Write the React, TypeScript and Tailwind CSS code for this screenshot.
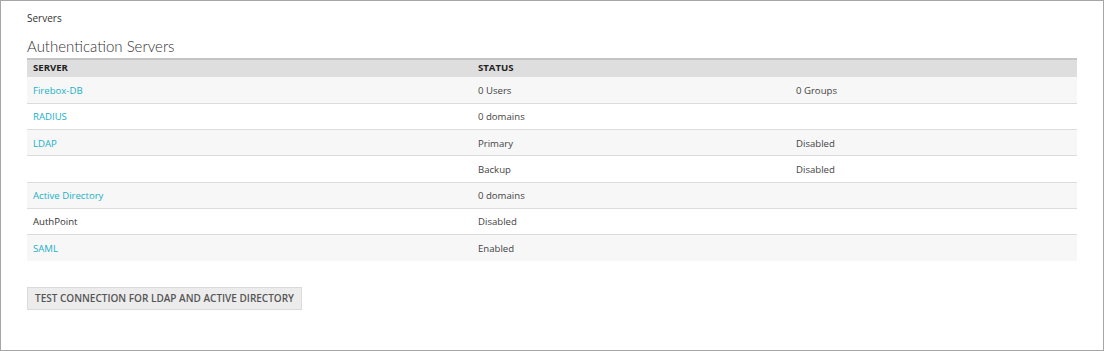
import React from 'react';

interface Row {
  name: string;
  link: boolean;
  status: string;
  extra?: string;
}

const rows: Row[] = [
  { name: 'Firebox-DB', link: true, status: '0 Users', extra: '0 Groups' },
  { name: 'RADIUS', link: true, status: '0 domains' },
  { name: 'LDAP', link: true, status: 'Primary', extra: 'Disabled' },
  { name: '', link: false, status: 'Backup', extra: 'Disabled' },
  { name: 'Active Directory', link: true, status: '0 domains' },
  { name: 'AuthPoint', link: false, status: 'Disabled' },
  { name: 'SAML', link: true, status: 'Enabled' },
];

const App: React.FC = () => {
  return (
    <div
      className="w-[1104px] h-[351px] bg-white border border-[#a6a6a6] text-[#333] overflow-hidden"
      style={{ fontFamily: '"Open Sans", "Liberation Sans", sans-serif' }}
    >
      <div className="pl-[26px] pr-[26px] pt-[10px]">
        <div className="text-[10px] leading-[14px] text-[#333]">Servers</div>
        <h1
          className="mt-[12px] text-[15px] leading-[18px] font-light text-[#333]"
          style={{ fontFamily: 'Lato, "Open Sans", sans-serif' }}
        >
          Authentication Servers
        </h1>
        <table className="mt-[3px] w-[1050px] border-collapse text-[9.6px]">
          <thead>
            <tr className="bg-[#dedede] border-t-2 border-[#c4c4c4]">
              <th className="h-[18px] pl-[6px] text-left font-bold text-[#222] w-[451px]">SERVER</th>
              <th className="text-left font-bold text-[#222] w-[318px]">STATUS</th>
              <th></th>
            </tr>
          </thead>
          <tbody>
            {rows.map((r, i) => (
              <tr
                key={i}
                className={`${i % 2 === 0 ? 'bg-[#f7f7f7]' : 'bg-white'} ${i < rows.length - 1 ? 'border-b border-[#dcdcdc]' : ''}`}
              >
                <td className={`h-[26.3px] pl-[6px] pt-[2px] ${r.link ? 'text-[#1ab0c8]' : 'text-[#333]'}`}>{r.name}</td>
                <td className="pt-[2px] text-[#444]">{r.status}</td>
                <td className="pt-[2px] text-[#444]">{r.extra}</td>
              </tr>
            ))}
          </tbody>
        </table>
        <button className="block mt-[26px] h-[23px] px-[7px] bg-[#ececec] border border-[#dadada] text-[10px] font-semibold text-[#555]">
          TEST CONNECTION FOR LDAP AND ACTIVE DIRECTORY
        </button>
      </div>
    </div>
  );
};

export default App;
